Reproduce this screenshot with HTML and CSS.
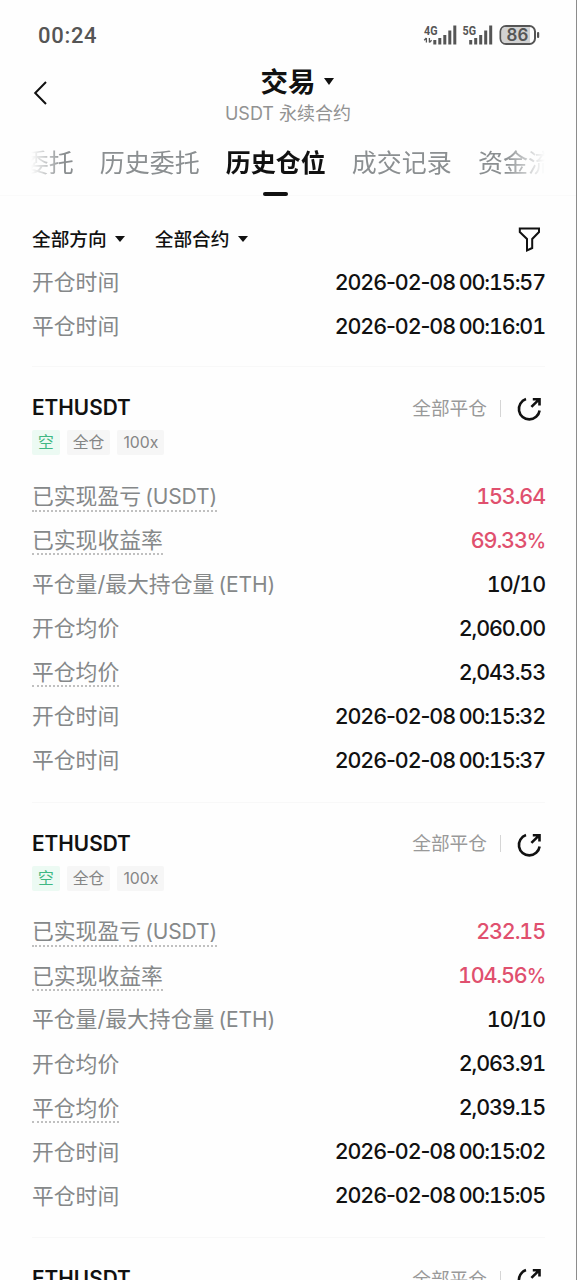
FILE: index.html
```
<!DOCTYPE html>
<html lang="zh-CN">
<head>
  <meta charset="UTF-8">
  <meta name="viewport" content="width=device-width, initial-scale=1.0">
  <title>历史仓位</title>
  <link rel="stylesheet" href="styles.css">
</head>
<body>
  <svg class="sprite">
    <symbol id="share" viewBox="0 0 26 26">
      <path d="M10 3.1A10.4 10.4 0 1 0 23.6 14.5" />
      <path d="M15.4 10.9L22.6 3.9M16.8 3.2H23.5V9.6" />
    </symbol>
  </svg>

  <div class="app">
    <div class="status-bar">
      <span class="time">00:24</span>
      <svg class="signals" width="118" height="26" viewBox="0 0 118 26">
        <g class="net">
          <text x="2" y="12.5" textLength="13.5" lengthAdjust="spacingAndGlyphs">4G</text>
          <text x="40.5" y="12.5" textLength="13.5" lengthAdjust="spacingAndGlyphs">5G</text>
        </g>
        <path class="arrows" d="M4.4 16V20.5M2.2 18.3L4.4 16M7.4 16V20.5M9.6 18.2L7.4 20.5" />
        <path class="bars" d="M12.8 22.5V18M17.8 22.5V16M22.8 22.5V13M27.8 22.5V8.5M32.8 22.5V3.5" />
        <path class="bars" d="M48.7 22.5V18M53.7 22.5V16M58.7 22.5V13M63.7 22.5V8.5M68.7 22.5V3.5" />
        <rect class="battery" x="78.5" y="4" width="34.5" height="18" rx="5.5" />
        <path class="fill" d="M84 5H108V21H84Q79.5 21 79.5 17V9Q79.5 5 84 5Z" />
        <rect class="tip" x="115" y="10" width="2.2" height="6" rx="1" />
        <text class="level" x="95.5" y="19" text-anchor="middle">86</text>
      </svg>
    </div>

    <div class="header">
      <svg class="back" width="16" height="26" viewBox="0 0 16 26">
        <path d="M13 2L2.2 13L13 24" />
      </svg>
      <div class="title">交易<i class="caret"></i></div>
      <div class="subtitle">USDT 永续合约</div>
    </div>

    <div class="tabs">
      <div class="tabs-scroll">
        <span>当前委托</span>
        <span>历史委托</span>
        <span class="active">历史仓位</span>
        <span>成交记录</span>
        <span>资金流水</span>
      </div>
    </div>

    <div class="filters">
      <span>全部方向<i class="caret"></i></span>
      <span>全部合约<i class="caret"></i></span>
      <svg class="funnel" width="24" height="26" viewBox="0 0 24 26">
        <path d="M2.8 2.4H22V6L15.2 13V22L10 24.4V13L2.8 6Z" />
      </svg>
    </div>

    <div class="list">
      <div class="card first">
        <div class="row"><span>开仓时间</span><b>2026<i>-</i>02<i>-</i>08 00:15:57</b></div>
        <div class="row"><span>平仓时间</span><b>2026<i>-</i>02<i>-</i>08 00:16:01</b></div>
      </div>

      <div class="card">
        <div class="card-head">
          <h2>ETHUSDT</h2>
          <span class="state">全部平仓</span>
          <svg class="share"><use href="#share" /></svg>
        </div>
        <div class="tags"><span class="short">空</span><span>全仓</span><span>100x</span></div>
        <div class="row"><span class="tip-line">已实现盈亏 <small>(USDT)</small></span><b class="red">153.64</b></div>
        <div class="row"><span class="tip-line">已实现收益率</span><b class="red">69.33<em>%</em></b></div>
        <div class="row"><span>平仓量/最大持仓量 <small>(ETH)</small></span><b>10/10</b></div>
        <div class="row"><span>开仓均价</span><b>2,060.00</b></div>
        <div class="row"><span class="tip-line">平仓均价</span><b>2,043.53</b></div>
        <div class="row"><span>开仓时间</span><b>2026<i>-</i>02<i>-</i>08 00:15:32</b></div>
        <div class="row"><span>平仓时间</span><b>2026<i>-</i>02<i>-</i>08 00:15:37</b></div>
      </div>

      <div class="card">
        <div class="card-head">
          <h2>ETHUSDT</h2>
          <span class="state">全部平仓</span>
          <svg class="share"><use href="#share" /></svg>
        </div>
        <div class="tags"><span class="short">空</span><span>全仓</span><span>100x</span></div>
        <div class="row"><span class="tip-line">已实现盈亏 <small>(USDT)</small></span><b class="red">232.15</b></div>
        <div class="row"><span class="tip-line">已实现收益率</span><b class="red">104.56<em>%</em></b></div>
        <div class="row"><span>平仓量/最大持仓量 <small>(ETH)</small></span><b>10/10</b></div>
        <div class="row"><span>开仓均价</span><b>2,063.91</b></div>
        <div class="row"><span class="tip-line">平仓均价</span><b>2,039.15</b></div>
        <div class="row"><span>开仓时间</span><b>2026<i>-</i>02<i>-</i>08 00:15:02</b></div>
        <div class="row"><span>平仓时间</span><b>2026<i>-</i>02<i>-</i>08 00:15:05</b></div>
      </div>

      <div class="card">
        <div class="card-head">
          <h2>ETHUSDT</h2>
          <span class="state">全部平仓</span>
          <svg class="share"><use href="#share" /></svg>
        </div>
      </div>
    </div>
  </div>
</body>
</html>
```
FILE: styles.css
```
* {
  box-sizing: border-box;
}
body {
  margin: 0;
  background: #fefefe;
  color: #111;
  font-family: Inter, "Noto Sans CJK SC", sans-serif;
}
.sprite {
  display: none;
}
.app {
  height: 1280px;
  overflow: hidden;
  border-right: 1px solid #8c8c8c;
}
svg {
  display: block;
  fill: none;
  stroke: #111;
  stroke-width: 2;
}
.caret {
  display: inline-block;
  border: 5px solid transparent;
  border-top: 7px solid #111;
  border-bottom: 0;
}

/* status bar */
.status-bar {
  display: flex;
  justify-content: space-between;
  align-items: center;
  height: 70px;
  padding: 0 36px 0 38px;
}
.time {
  font-family: Roboto, sans-serif;
  font-size: 22px;
  font-weight: 500;
  letter-spacing: 0.7px;
  color: #555;
}
.signals {
  stroke: #555;
}
.signals text {
  font: 700 12.5px Roboto, sans-serif;
  fill: #555;
  stroke: none;
}
.signals .bars {
  stroke-width: 3;
}
.signals .arrows {
  stroke-width: 1.3;
}
.signals .fill {
  fill: #d2d2d2;
  stroke: none;
}
.signals .tip {
  fill: #555;
  stroke: none;
}
.signals .level {
  font: 600 17px Inter, sans-serif;
}

/* header */
.header {
  display: grid;
  grid-template-columns: 60px 1fr 60px;
  height: 60px;
  text-align: center;
}
.back {
  grid-row: 1 / 3;
  margin: 10px 0 0 33px;
}
.title {
  height: 28px;
  margin-left: 18px;
  line-height: 24px;
  font-size: 27.5px;
  font-weight: 700;
}
.title .caret {
  margin-left: 8px;
  vertical-align: 7px;
}
.subtitle {
  grid-column: 2;
  line-height: 30px;
  font-size: 18px;
  color: #929292;
}

/* tabs */
.tabs {
  height: 66px;
  padding: 0 31px;
  border-bottom: 1px solid #fafafa;
}
.tabs-scroll {
  display: flex;
  gap: 26px;
  height: 66px;
  overflow: hidden;
  -webkit-mask-image: linear-gradient(to right, transparent, #000 32px, #000 calc(100% - 40px), transparent);
  mask-image: linear-gradient(to right, transparent, #000 32px, #000 calc(100% - 40px), transparent);
}
.tabs-scroll span {
  flex: none;
  line-height: 66px;
  font-size: 25px;
  color: #8b8f91;
}
.tabs-scroll span:first-child {
  margin-left: -57.2px;
}
.tabs-scroll .active {
  font-weight: 700;
  color: #111;
}
.tabs-scroll .active::after {
  content: "";
  display: block;
  width: 25px;
  height: 4px;
  margin: -4px auto 0;
  border-radius: 2px;
  background: #111;
}

/* filters */
.filters {
  display: flex;
  align-items: center;
  gap: 30px;
  height: 64px;
  padding: 22px 35px 0 32px;
  font-size: 18.7px;
  font-weight: 500;
}
.filters span {
  padding-bottom: 4px;
}
.filters .caret {
  margin-left: 8px;
  border-width: 6px 5px 0;
  vertical-align: 4px;
}
.funnel {
  margin-left: auto;
}

/* positions */
.list {
  padding: 0 31px 0 32px;
}
.card {
  height: 435.5px;
  padding-top: 26px;
  border-top: 1px solid #f8f8f8;
}
.card.first {
  height: 106px;
  padding-top: 0;
  border-top: 0;
}
.card-head {
  display: flex;
  align-items: center;
  height: 30px;
}
.card-head h2 {
  margin: 0 auto 1px 0;
  font-size: 20.8px;
  font-weight: 600;
}
.state {
  padding-right: 13px;
  line-height: 17px;
  font-size: 18.7px;
  color: #999;
  border-right: 1.5px solid #d5d5d5;
}
.share {
  width: 26px;
  height: 26px;
  margin: 2px 3px 0 15px;
  stroke-width: 2.6;
}
.tags {
  display: flex;
  gap: 7px;
  margin: 7px 0 19px;
}
.tags span {
  height: 25px;
  padding: 0 6px;
  line-height: 25px;
  font-size: 15.8px;
  color: #858585;
  background: #f6f6f6;
  border-radius: 2px;
}
.tags .short {
  color: #3fb883;
  background: #ecfaf3;
}
.row {
  display: flex;
  justify-content: space-between;
  align-items: center;
  height: 44px;
  font-size: 21.8px;
  color: #858889;
}
.row span {
  padding-top: 2px;
  line-height: 26px;
  border-bottom: 2px solid transparent;
  word-spacing: -2px;
}
.row small {
  font-size: 21px;
  letter-spacing: -0.1px;
}
.row b {
  padding-bottom: 1px;
  font-weight: 500;
  font-size: 21.5px;
  font-feature-settings: "tnum";
  letter-spacing: -1.1px;
  word-spacing: -1px;
  color: #111;
}
.row b i {
  font-style: normal;
  font-feature-settings: normal;
}
.row b em {
  font-style: normal;
  font-size: 19.5px;
}
.row .red {
  color: #e0506e;
}
.row .tip-line {
  border-bottom: 2px dotted #c0c0c0;
}
```
